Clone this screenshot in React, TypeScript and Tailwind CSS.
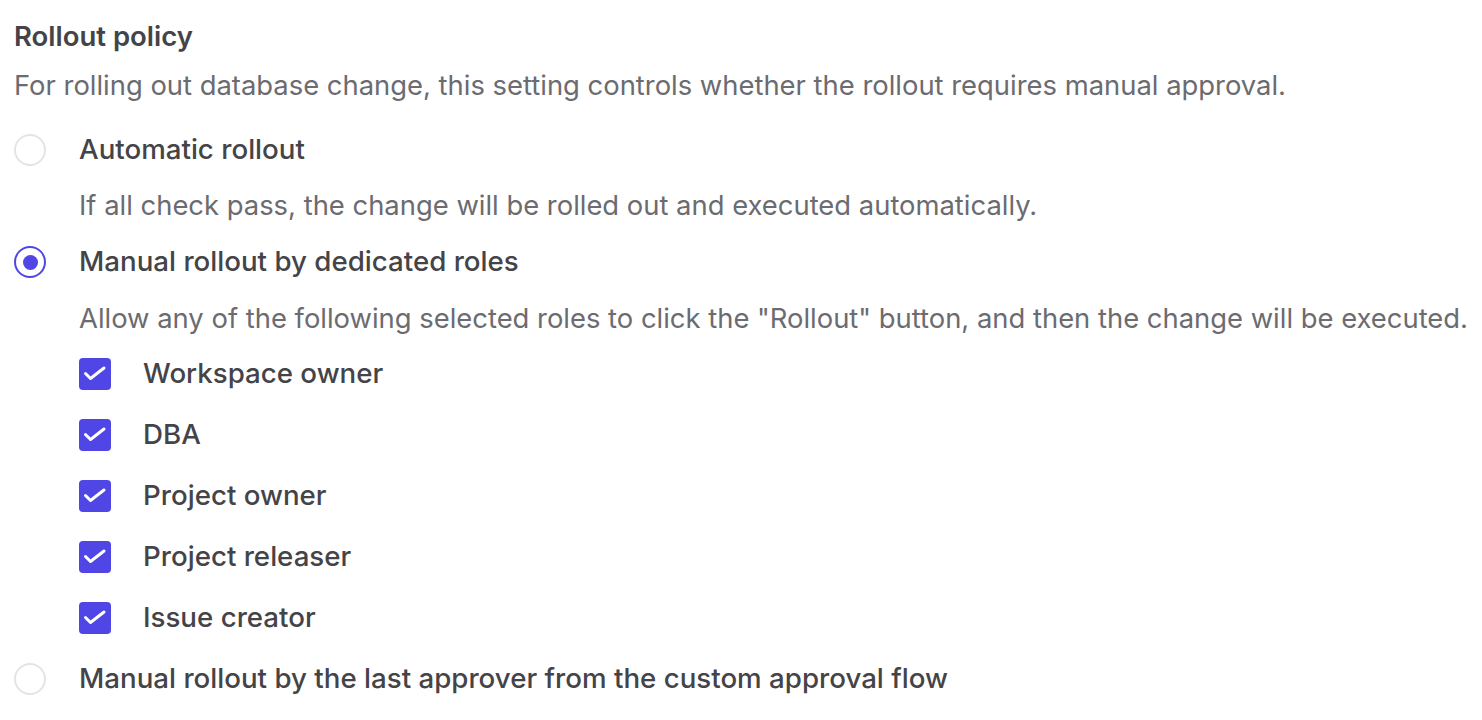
import { useState } from "react";

type Role = { id: string; label: string };

const ROLES: Role[] = [
  { id: "workspace-owner", label: "Workspace owner" },
  { id: "dba", label: "DBA" },
  { id: "project-owner", label: "Project owner" },
  { id: "project-releaser", label: "Project releaser" },
  { id: "issue-creator", label: "Issue creator" },
];

function Radio({ checked }: { checked: boolean }) {
  return checked ? (
    <span className="flex h-[32px] w-[32px] shrink-0 items-center justify-center rounded-full border-2 border-[#4f46e5] bg-white">
      <span className="h-[15px] w-[15px] rounded-full bg-[#4f46e5]" />
    </span>
  ) : (
    <span className="h-[32px] w-[32px] shrink-0 rounded-full border-2 border-[#e4e4e7] bg-white" />
  );
}

function Checkbox({ checked }: { checked: boolean }) {
  return (
    <span
      className={
        checked
          ? "flex h-[32px] w-[32px] shrink-0 items-center justify-center rounded-[4px] bg-[#4f46e5]"
          : "flex h-[32px] w-[32px] shrink-0 items-center justify-center rounded-[4px] border-2 border-[#e4e4e7] bg-white"
      }
    >
      {checked ? (
        <svg width="32" height="32" viewBox="0 0 32 32" fill="none">
          <path d="M6.5 15.5 L11.5 20.5 L25 10" stroke="white" strokeWidth="3" strokeLinecap="round" strokeLinejoin="round" />
        </svg>
      ) : null}
    </span>
  );
}

export default function App() {
  const [policy, setPolicy] = useState("manual-roles");
  const [roles, setRoles] = useState<string[]>(ROLES.map((r) => r.id));

  const toggle = (id: string) =>
    setRoles((prev) => (prev.includes(id) ? prev.filter((r) => r !== id) : [...prev, id]));

  return (
    <div className="min-h-[720px] bg-white pl-[14px] font-['Inter',sans-serif] text-[27.4px] text-[#444448]">
      <h2 className="mt-[18px] text-[27.5px] leading-[36px] font-semibold">Rollout policy</h2>
      <p className="mt-[13px] leading-[36px] text-[#6b6b70]">
        For rolling out database change, this setting controls whether the rollout requires manual approval.
      </p>

      <div className="mt-[27px] flex flex-col">
        <button className="flex h-[40px] items-center gap-[33px] text-left" onClick={() => setPolicy("auto")}>
          <Radio checked={policy === "auto"} />
          <span className="text-[27.7px] font-medium">Automatic rollout</span>
        </button>
        <p className="mt-[15px] ml-[65px] leading-[40px] text-[#6b6b70]">
          If all check pass, the change will be rolled out and executed automatically.
        </p>

        <button className="mt-[17px] flex h-[40px] items-center gap-[33px] text-left" onClick={() => setPolicy("manual-roles")}>
          <Radio checked={policy === "manual-roles"} />
          <span className="text-[27.7px] font-medium">Manual rollout by dedicated roles</span>
        </button>
        <p className="mt-[16px] ml-[65px] leading-[40px] whitespace-nowrap text-[#6b6b70]">
          Allow any of the following selected roles to click the "Rollout" button, and then the change will be executed.
        </p>

        <div className="mt-[16px] ml-[65px] flex flex-col gap-[21px]">
          {ROLES.map((role) => (
            <button key={role.id} className="flex h-[40px] items-center gap-[32px] text-left" onClick={() => toggle(role.id)}>
              <Checkbox checked={roles.includes(role.id)} />
              <span className="text-[27.7px] font-medium">{role.label}</span>
            </button>
          ))}
        </div>

        <button className="mt-[21px] flex h-[40px] items-center gap-[33px] text-left" onClick={() => setPolicy("manual-approver")}>
          <Radio checked={policy === "manual-approver"} />
          <span className="text-[27.7px] font-medium">Manual rollout by the last approver from the custom approval flow</span>
        </button>
      </div>
    </div>
  );
}
